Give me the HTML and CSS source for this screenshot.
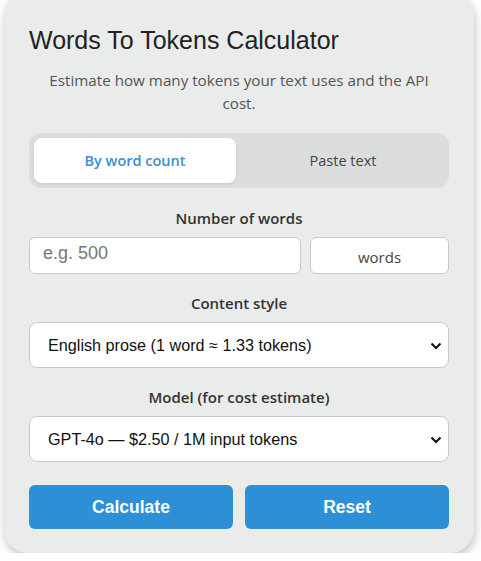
FILE: index.html
```html
<!DOCTYPE html>
<html>

<head>
    <title>Words To Tokens Calculator</title>
    <link rel="stylesheet" href="styles.css">
</head>

<body>
    <div class="card">
        <h1 class="title">Words To Tokens Calculator</h1>
        <p class="subtitle">Estimate how many tokens your text uses and the API cost.</p>

        <div class="tabs">
            <button class="tab active">By word count</button>
            <button class="tab">Paste text</button>
        </div>

        <label class="field-label" for="words">Number of words</label>
        <div class="input-row">
            <input type="text" id="words" class="text-input" placeholder="e.g. 500">
            <div class="unit">words</div>
        </div>

        <label class="field-label" for="style">Content style</label>
        <div class="select-wrap">
            <select id="style" class="select">
                <option>English prose (1 word ≈ 1.33 tokens)</option>
                <option>Technical text (1 word ≈ 1.5 tokens)</option>
                <option>Code (1 word ≈ 2 tokens)</option>
            </select>
            <svg class="chevron" width="12" height="8" viewBox="0 0 12 8">
                <path d="M1.5 1.5 L6 6 L10.5 1.5" fill="none" stroke="#111" stroke-width="2" />
            </svg>
        </div>

        <label class="field-label" for="model">Model (for cost estimate)</label>
        <div class="select-wrap">
            <select id="model" class="select">
                <option>GPT-4o — $2.50 / 1M input tokens</option>
                <option>GPT-4o mini — $0.15 / 1M input tokens</option>
            </select>
            <svg class="chevron" width="12" height="8" viewBox="0 0 12 8">
                <path d="M1.5 1.5 L6 6 L10.5 1.5" fill="none" stroke="#111" stroke-width="2" />
            </svg>
        </div>

        <div class="actions">
            <button class="btn">Calculate</button>
            <button class="btn">Reset</button>
        </div>
    </div>
</body>

</html>
```

FILE: styles.css
```css
html,
body {
    margin: 0;
    padding: 0;
    background: #ffffff;
    font-family: 'Open Sans', 'Noto Sans', sans-serif;
}

.card {
    width: 420px;
    margin: -8px 0 0 4px;
    padding: 32px 25px 24px;
    background: #eaebeb;
    border-radius: 24px;
    box-shadow: 1px 4px 10px rgba(0, 0, 0, 0.24);
}

.title {
    margin: 0;
    font-family: 'Liberation Sans', Arial, sans-serif;
    font-size: 25px;
    font-weight: normal;
    color: #222;
    line-height: 32px;
}

.subtitle {
    margin: 13px 18px 18px;
    text-align: center;
    font-size: 15.2px;
    line-height: 23px;
    color: #555;
}

.tabs {
    display: flex;
    gap: 6px;
    padding: 5px;
    background: #dcdddf;
    border-radius: 12px;
    margin-bottom: 20px;
}

.tab {
    flex: 1;
    height: 45px;
    border: none;
    border-radius: 8px;
    background: transparent;
    font-family: 'Open Sans', 'Noto Sans', sans-serif;
    font-size: 14.5px;
    color: #444;
}

.tab.active {
    background: #ffffff;
    color: #3a8fd6;
    font-weight: 600;
    box-shadow: 0 1px 3px rgba(0, 0, 0, 0.1);
}

.field-label {
    display: block;
    text-align: center;
    font-weight: 600;
    font-size: 15px;
    color: #333;
    margin-bottom: 9px;
}

.input-row {
    display: flex;
    gap: 9px;
    margin-bottom: 19px;
}

.text-input {
    flex: 1;
    min-width: 0;
    height: 37px;
    box-sizing: border-box;
    padding: 0 13px 4px;
    border: 1px solid #c9c9c9;
    border-radius: 6px;
    font-family: 'Liberation Sans', Arial, sans-serif;
    font-size: 18px;
    color: #222;
}

.text-input::placeholder {
    color: #777;
}

.unit {
    width: 139px;
    height: 37px;
    box-sizing: border-box;
    padding-top: 6px;
    border: 1px solid #c9c9c9;
    border-radius: 6px;
    background: #ffffff;
    text-align: center;
    font-size: 15px;
    line-height: 26px;
    color: #444;
}

.select-wrap {
    position: relative;
    margin-bottom: 19px;
}

.select {
    display: block;
    width: 100%;
    height: 46px;
    padding: 0 18px;
    border: 1px solid #c9c9c9;
    border-radius: 8px;
    background: #ffffff;
    -webkit-appearance: none;
    appearance: none;
    font-family: 'Liberation Sans', Arial, sans-serif;
    font-size: 16.2px;
    color: #111;
}

.chevron {
    position: absolute;
    right: 7px;
    top: 20px;
}

.actions {
    display: flex;
    gap: 12px;
    margin-top: 23px;
}

.btn {
    flex: 1;
    height: 44px;
    border: none;
    border-radius: 6px;
    background: #2d90d6;
    color: #ffffff;
    font-family: 'Liberation Sans', Arial, sans-serif;
    font-weight: bold;
    font-size: 17.5px;
}
```
